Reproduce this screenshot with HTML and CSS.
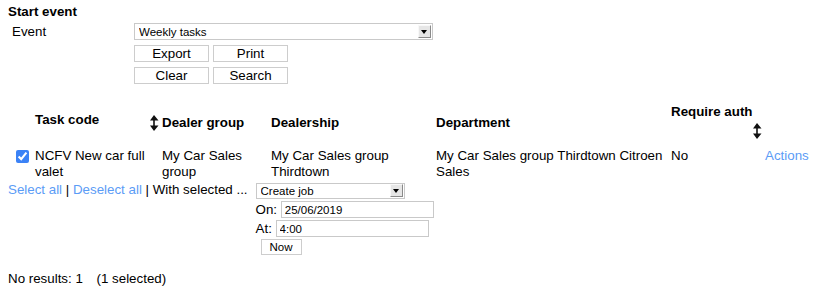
FILE: index.html
```html
<!DOCTYPE html>
<html lang="en">
<head>
  <meta charset="UTF-8" />
  <title>Start event</title>
  <link rel="stylesheet" href="styles.css">
</head>
<body>
  <div class="page">

    <h2 class="title">Start event</h2>

    <div class="event-form">
      <label class="event-label" for="event">Event</label>
      <div class="event-controls">
        <div class="select select-wide">
          <select id="event">
            <option>Weekly tasks</option>
          </select>
          <span class="select-arrow"></span>
        </div>
        <div class="btn-grid">
          <button class="btn">Export</button>
          <button class="btn">Print</button>
          <button class="btn">Clear</button>
          <button class="btn">Search</button>
        </div>
      </div>
    </div>

    <table class="results">
      <colgroup>
        <col class="col-check" />
        <col class="col-code" />
        <col class="col-group" />
        <col class="col-dealer" />
        <col class="col-dept" />
        <col class="col-auth" />
        <col />
      </colgroup>
      <thead>
        <tr>
          <th></th>
          <th>
            Task code
            <svg class="sort" width="10" height="21" viewBox="0 0 10 21">
              <path d="M5 3 L9.5 8.5 H1 Z M1 13.5 H9.5 L5 19 Z" fill="#111" />
              <path d="M5 7 V15" stroke="#111" stroke-width="1.6" />
            </svg>
          </th>
          <th>Dealer group</th>
          <th>Dealership</th>
          <th>Department</th>
          <th>
            Require auth
            <svg class="sort" width="10" height="21" viewBox="0 0 10 21">
              <path d="M5 3 L9.5 8.5 H1 Z M1 13.5 H9.5 L5 19 Z" fill="#111" />
              <path d="M5 7 V15" stroke="#111" stroke-width="1.6" />
            </svg>
          </th>
          <th></th>
        </tr>
      </thead>
      <tbody>
        <tr>
          <td><input type="checkbox" class="row-check" checked /></td>
          <td>NCFV New car full valet</td>
          <td>My Car Sales group</td>
          <td>My Car Sales group Thirdtown</td>
          <td>My Car Sales group Thirdtown Citroen Sales</td>
          <td>No</td>
          <td><a href="#" class="link">Actions</a></td>
        </tr>
      </tbody>
    </table>

    <div class="bulk">
      <span class="bulk-links">
        <a href="#" class="link">Select all</a> | <a href="#" class="link">Deselect all</a> | With selected ...
      </span>
      <div class="bulk-fields">
        <div class="select select-small">
          <select>
            <option>Create job</option>
          </select>
          <span class="select-arrow"></span>
        </div>
        <div class="field-row">On: <input type="text" class="text-input" value="25/06/2019" /></div>
        <div class="field-row">At: <input type="text" class="text-input" value="4:00" /></div>
        <button class="btn btn-small">Now</button>
      </div>
    </div>

    <p class="summary">No results: 1 <span class="selected-count">(1 selected)</span></p>

  </div>
</body>
</html>
```

FILE: styles.css
```css
body {
  margin: 0;
  background: #fff;
  color: #000;
  font-family: "Liberation Sans", Arial, sans-serif;
  font-size: 13.33px;
}

.page {
  padding: 4px 8px;
}

.title {
  margin: 0;
  font-size: 13.33px;
  line-height: 15px;
  font-weight: bold;
}

.event-form {
  display: flex;
  margin-top: 4px;
}

.event-label {
  width: 122px;
  padding-left: 4px;
  line-height: 17px;
}

.event-controls {
  display: flex;
  flex-direction: column;
}

/* select boxes with the old bevelled arrow button */
.select {
  position: relative;
}

.select select {
  appearance: none;
  -webkit-appearance: none;
  box-sizing: border-box;
  width: 100%;
  height: 100%;
  margin: 0;
  padding: 0 0 0 4px;
  border: 1px solid #c9c9c9;
  border-radius: 0;
  background: #fff;
  color: #000;
  font-family: "Liberation Sans", Arial, sans-serif;
  font-size: 11.5px;
}

.select-arrow {
  position: absolute;
  top: 2px;
  right: 2px;
  width: 13px;
  height: 13px;
  box-sizing: border-box;
  background: #e6e6e6;
  border-top: 1px solid #f8f8f8;
  border-left: 1px solid #f8f8f8;
  border-right: 1px solid #8a8a8a;
  border-bottom: 1px solid #8a8a8a;
  pointer-events: none;
}

.select-arrow::after {
  content: "";
  position: absolute;
  left: 2px;
  top: 4px;
  border-left: 3.5px solid transparent;
  border-right: 3.5px solid transparent;
  border-top: 4px solid #000;
}

.select-wide {
  width: 299px;
  height: 17px;
}

.select-small {
  width: 149px;
  height: 16px;
}

.select-small .select-arrow {
  top: 1px;
}

.btn-grid {
  display: grid;
  grid-template-columns: 75px 75px;
  gap: 5px 4px;
  margin-top: 5px;
}

.btn {
  box-sizing: border-box;
  height: 17px;
  margin: 0;
  padding: 0;
  border: 1px solid #cdcdcd;
  background: #fff;
  color: #000;
  font-family: "Liberation Sans", Arial, sans-serif;
  font-size: 13.33px;
  line-height: 15px;
}

/* results table */
.results {
  margin-top: 20px;
  border-collapse: collapse;
  table-layout: fixed;
  width: 816px;
  line-height: 16px;
}

.col-check { width: 27px; }
.col-code { width: 127px; }
.col-group { width: 109px; }
.col-dealer { width: 165px; }
.col-dept { width: 235px; }
.col-auth { width: 94px; }

.results th {
  padding: 0 3px 7px 0;
  text-align: left;
  vertical-align: middle;
  font-weight: bold;
}

.results td {
  padding: 0 3px 0 0;
  vertical-align: top;
}

.sort {
  float: right;
  margin-left: 4px;
}

.row-check {
  display: block;
  width: 13px;
  height: 13px;
  margin: 2px 0 0 8px;
  accent-color: #3b82f6;
}

.link {
  color: #5b9cf6;
  text-decoration: none;
}

/* bulk actions */
.bulk {
  display: flex;
  align-items: flex-start;
  gap: 8px;
}

.bulk-links {
  padding-top: 2px;
  line-height: 16px;
}

.bulk-fields {
  display: flex;
  flex-direction: column;
  align-items: flex-start;
  padding-top: 3px;
}

.field-row {
  margin-top: 2px;
  line-height: 17px;
}

.text-input {
  box-sizing: border-box;
  width: 153px;
  height: 17px;
  margin: 0;
  padding: 0 3px;
  border: 1px solid #c9c9c9;
  border-radius: 0;
  font-family: "Liberation Sans", Arial, sans-serif;
  font-size: 11.5px;
  vertical-align: top;
}

.btn-small {
  width: 41px;
  height: 16px;
  margin: 2px 0 0 5px;
  font-size: 11.5px;
  line-height: 14px;
}

.summary {
  margin: 16px 0 0;
  line-height: 16px;
}

.selected-count {
  margin-left: 10px;
}
```
